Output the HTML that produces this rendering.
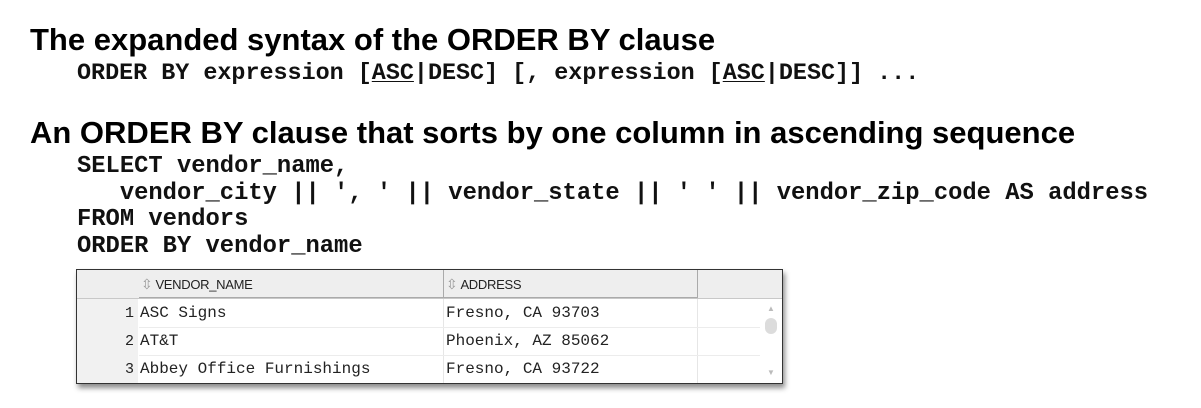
<!DOCTYPE html>
<html><head><style>
body{margin:0;width:1201px;height:408px;background:#fff;position:relative;overflow:hidden;font-family:"Liberation Sans",Arial,sans-serif}
.h{position:absolute;left:30px;font-weight:bold;font-size:31px;color:#000;white-space:nowrap;line-height:1}
.c{position:absolute;left:77px;font-family:"Liberation Mono","Courier New",monospace;font-weight:bold;font-size:23.4px;white-space:pre;color:#111;line-height:26.5px}
.c u{text-decoration:underline;text-decoration-thickness:1px;text-underline-offset:2px}
.tbl{position:absolute;left:76px;top:269px;width:705px;height:113px;border:1px solid #333;background:#fff;box-shadow:2px 4px 5px rgba(0,0,0,.45)}
.hdr{position:absolute;left:0;top:0;width:705px;height:28px;background:#eeeeee;border-bottom:1px solid #c8c8c8}
.cell{position:absolute;font-family:"Liberation Mono","Courier New",monospace;font-size:16px;color:#222;white-space:pre}
.hc{position:absolute;top:0;height:27px;font-size:13px;color:#222;line-height:28px;letter-spacing:-0.3px;border-right:1px solid #aaa;border-bottom:1px solid #aaa}
.arr{display:inline-block;color:#999;font-size:14px;margin:0 3px 0 2px}
.rn{position:absolute;left:0;top:29px;width:61px;height:84px;background:#f1f1f1}
.rl{position:absolute;left:62px;width:621px;height:1px;background:#ececec}
</style></head><body>
<div class="h" style="top:24px">The expanded syntax of the ORDER BY clause</div>
<div class="c" style="top:61px">ORDER BY expression [<u>ASC</u>|DESC] [, expression [<u>ASC</u>|DESC]] ...</div>
<div class="h" style="top:117px">An ORDER BY clause that sorts by one column in ascending sequence</div>
<div class="c" style="top:154px;font-size:23.8px">SELECT vendor_name,
   vendor_city || ', ' || vendor_state || ' ' || vendor_zip_code AS address
FROM vendors
ORDER BY vendor_name</div>
<div class="tbl">
 <div class="hdr"></div>
 <div class="hc" style="left:62px;width:304px"><span class="arr">⇳</span>VENDOR_NAME</div>
 <div class="hc" style="left:367px;width:253px"><span class="arr">⇳</span>ADDRESS</div>
 <div class="rn"></div>
 <div style="position:absolute;left:366px;top:29px;width:1px;height:84px;background:#e6e6e6"></div>
 <div style="position:absolute;left:620px;top:29px;width:1px;height:84px;background:#e6e6e6"></div>
 <div class="rl" style="top:57px"></div><div class="rl" style="top:85px"></div>
 <div class="cell" style="left:48px;top:35px;font-size:15px">1</div>
 <div class="cell" style="left:48px;top:63px;font-size:15px">2</div>
 <div class="cell" style="left:48px;top:91px;font-size:15px">3</div>
 <div class="cell" style="left:63px;top:34px">ASC Signs</div>
 <div class="cell" style="left:63px;top:62px">AT&amp;T</div>
 <div class="cell" style="left:63px;top:90px">Abbey Office Furnishings</div>
 <div class="cell" style="left:369px;top:34px">Fresno, CA 93703</div>
 <div class="cell" style="left:369px;top:62px">Phoenix, AZ 85062</div>
 <div class="cell" style="left:369px;top:90px">Fresno, CA 93722</div>
 <div style="position:absolute;left:690px;top:34px;font-size:8px;color:#bbb">▲</div>
 <div style="position:absolute;left:688px;top:48px;width:12px;height:16px;border-radius:6px;background:#dcdcdc"></div>
 <div style="position:absolute;left:690px;top:98px;font-size:8px;color:#bbb">▼</div>
</div>
</body></html>
